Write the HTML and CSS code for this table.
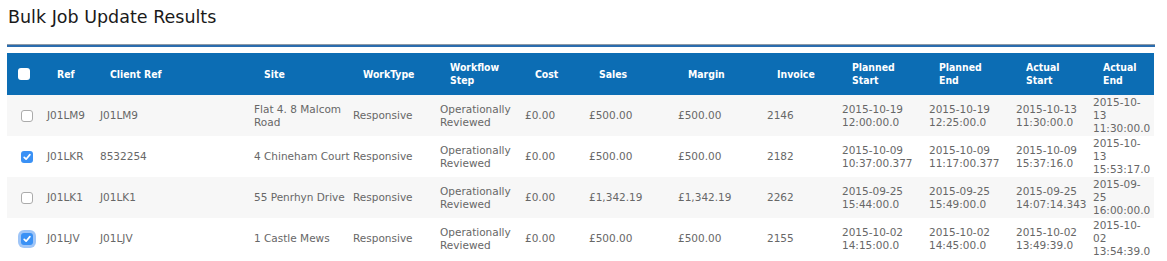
FILE: index.html
```html
<!DOCTYPE html>
<html lang="en">
<head>
<meta charset="utf-8">
<title>Bulk Job Update Results</title>
<link rel="stylesheet" href="styles.css">
</head>
<body>
<div class="page">
  <h1 class="title">Bulk Job Update Results</h1>
  <div class="rule"></div>
  <table class="results">
    <colgroup>
      <col class="c-cb"><col class="c-ref"><col class="c-client"><col class="c-site"><col class="c-type"><col class="c-step"><col class="c-cost"><col class="c-sales"><col class="c-margin"><col class="c-inv"><col class="c-ps"><col class="c-pe"><col class="c-as"><col class="c-ae">
    </colgroup>
    <thead>
      <tr>
        <th class="cb-cell"><span class="cb cb-head"></span></th>
        <th>Ref</th>
        <th>Client Ref</th>
        <th>Site</th>
        <th>WorkType</th>
        <th>Workflow Step</th>
        <th>Cost</th>
        <th>Sales</th>
        <th>Margin</th>
        <th>Invoice</th>
        <th>Planned Start</th>
        <th>Planned End</th>
        <th>Actual Start</th>
        <th>Actual End</th>
      </tr>
    </thead>
    <tbody>
      <tr>
        <td class="cb-cell"><span class="cb"></span></td>
        <td>J01LM9</td>
        <td>J01LM9</td>
        <td>Flat 4. 8 Malcom Road</td>
        <td>Responsive</td>
        <td>Operationally Reviewed</td>
        <td>£0.00</td>
        <td>£500.00</td>
        <td>£500.00</td>
        <td>2146</td>
        <td>2015-10-19 12:00:00.0</td>
        <td>2015-10-19 12:25:00.0</td>
        <td>2015-10-13 11:30:00.0</td>
        <td>2015-10-<wbr>13 11:30:00.0</td>
      </tr>
      <tr>
        <td class="cb-cell"><span class="cb checked"><svg viewBox="0 0 12 12" width="12" height="12"><path d="M3.2 6.3 L5.1 8.2 L8.9 3.6" fill="none" stroke="#fff" stroke-width="1.7" stroke-linecap="round" stroke-linejoin="round"/></svg></span></td>
        <td>J01LKR</td>
        <td>8532254</td>
        <td>4 Chineham Court</td>
        <td>Responsive</td>
        <td>Operationally Reviewed</td>
        <td>£0.00</td>
        <td>£500.00</td>
        <td>£500.00</td>
        <td>2182</td>
        <td>2015-10-09 10:37:00.377</td>
        <td>2015-10-09 11:17:00.377</td>
        <td>2015-10-09 15:37:16.0</td>
        <td>2015-10-<wbr>13 15:53:17.0</td>
      </tr>
      <tr>
        <td class="cb-cell"><span class="cb"></span></td>
        <td>J01LK1</td>
        <td>J01LK1</td>
        <td>55 Penrhyn Drive</td>
        <td>Responsive</td>
        <td>Operationally Reviewed</td>
        <td>£0.00</td>
        <td>£1,342.19</td>
        <td>£1,342.19</td>
        <td>2262</td>
        <td>2015-09-25 15:44:00.0</td>
        <td>2015-09-25 15:49:00.0</td>
        <td>2015-09-25 14:07:14.343</td>
        <td>2015-09-<wbr>25 16:00:00.0</td>
      </tr>
      <tr>
        <td class="cb-cell"><span class="cb checked focused"><svg viewBox="0 0 12 12" width="12" height="12"><path d="M3.2 6.3 L5.1 8.2 L8.9 3.6" fill="none" stroke="#fff" stroke-width="1.7" stroke-linecap="round" stroke-linejoin="round"/></svg></span></td>
        <td>J01LJV</td>
        <td>J01LJV</td>
        <td>1 Castle Mews</td>
        <td>Responsive</td>
        <td>Operationally Reviewed</td>
        <td>£0.00</td>
        <td>£500.00</td>
        <td>£500.00</td>
        <td>2155</td>
        <td>2015-10-02 14:15:00.0</td>
        <td>2015-10-02 14:45:00.0</td>
        <td>2015-10-02 13:49:39.0</td>
        <td>2015-10-<wbr>02 13:54:39.0</td>
      </tr>
    </tbody>
  </table>
</div>
</body>
</html>
```
FILE: styles.css
```css
html, body {
  margin: 0;
  padding: 0;
  background: #ffffff;
}

body {
  font-family: "DejaVu Sans", Verdana, sans-serif;
  color: #666666;
}

.page {
  padding: 7px 12px 0 7px;
}

.title {
  margin: 0 0 0 1px;
  font-size: 17.5px;
  line-height: 20px;
  font-weight: normal;
  color: #1a1a1a;
}

.rule {
  margin-top: 17px;
  width: 1148px;
  height: 2px;
  border-top: 1px solid #8e9aa6;
  background: #2b6cae;
}

.results {
  margin-top: 6px;
  width: 1147px;
  table-layout: fixed;
  border-collapse: collapse;
  border-spacing: 0;
}

.c-cb { width: 39px; }
.c-ref { width: 53px; }
.c-client { width: 154px; }
.c-site { width: 99px; }
.c-type { width: 87px; }
.c-step { width: 85px; }
.c-cost { width: 64px; }
.c-sales { width: 89px; }
.c-margin { width: 89px; }
.c-inv { width: 75px; }
.c-ps { width: 87px; }
.c-pe { width: 87px; }
.c-as { width: 77px; }
.c-ae { width: 62px; }

.results thead tr {
  background: #0c6db4;
}

.results th {
  height: 42px;
  padding: 0 12px 0 11px;
  text-align: left;
  vertical-align: middle;
  font-family: "DejaVu Sans Condensed", "DejaVu Sans", sans-serif;
  font-size: 10.4px;
  line-height: 13px;
  font-weight: bold;
  color: #ffffff;
}

.results td {
  height: 41px;
  padding: 0 1px;
  vertical-align: middle;
  font-size: 10.5px;
  line-height: 13px;
  color: #676767;
}

.results tbody tr:nth-child(odd) {
  background: #f7f7f7;
}

.results tbody tr:nth-child(even) {
  background: #ffffff;
}

.results th.cb-cell {
  padding: 0 0 0 11px;
}

.results td.cb-cell {
  padding: 0 0 0 14px;
}

.cb {
  display: block;
  width: 10px;
  height: 10px;
  border: 1px solid #ababab;
  border-radius: 3px;
  background: #ffffff;
}

.cb-head {
  width: 12px;
  height: 12px;
  border: 0;
  background: #ffffff;
}

.cb.checked {
  width: 12px;
  height: 12px;
  border: 0;
  background: #3a91f5;
  position: relative;
}

.cb.checked svg {
  display: block;
}

.cb.focused {
  box-shadow: 0 0 0 3px rgba(80, 150, 240, 0.55);
  border-radius: 3px;
}
```
